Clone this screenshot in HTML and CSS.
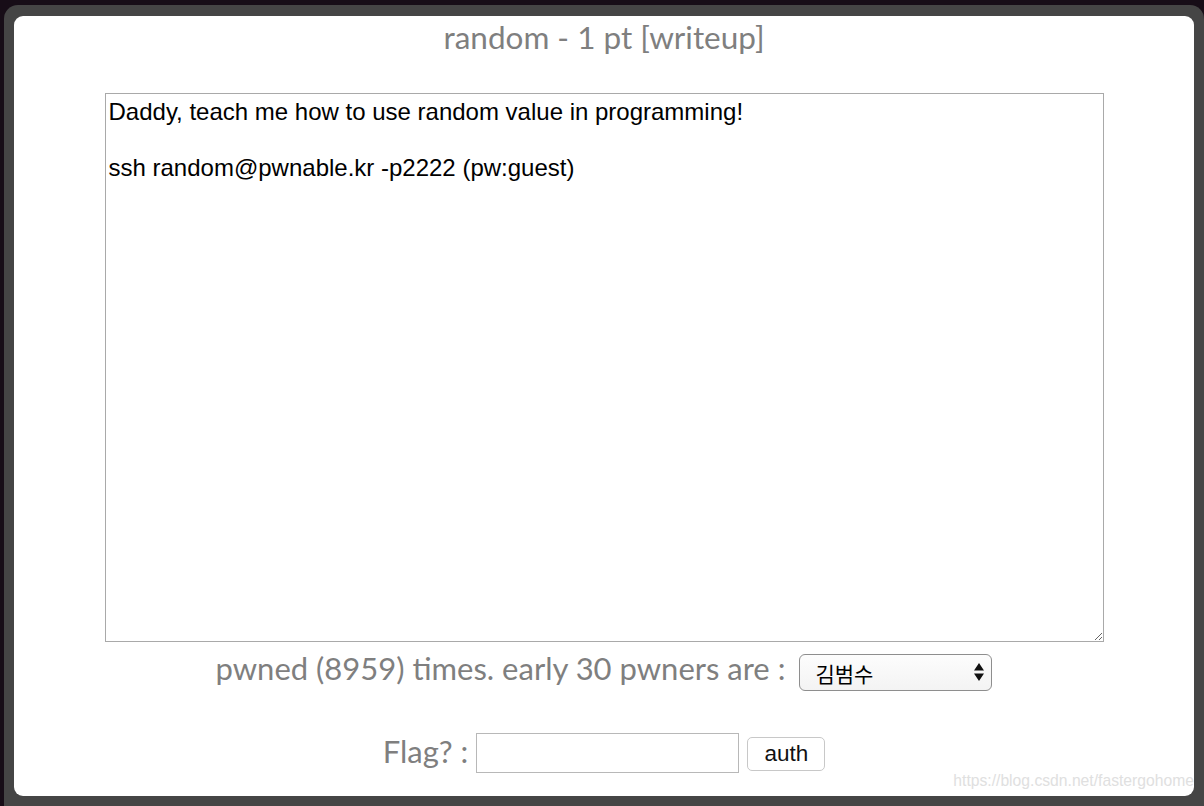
FILE: index.html
```html
<!DOCTYPE html>
<html>
<head>
<meta charset="utf-8">
<link rel="stylesheet" href="styles.css">
</head>
<body>
<div class="frame">
  <div class="modal">
    <div class="title">random - 1 pt [writeup]</div>
    <textarea class="desc">Daddy, teach me how to use random value in programming!

ssh random@pwnable.kr -p2222 (pw:guest)</textarea>
    <div class="pwned">
      <span class="label">pwned (8959) times. early 30 pwners are :</span>
      <span class="sel">
        <select class="pwners"><option>김범수</option></select>
        <svg class="arrows" width="12" height="20" viewBox="0 0 12 20"><path d="M6 1 L11 8.5 L1 8.5 Z M6 19 L11 11.5 L1 11.5 Z" fill="#111"/></svg>
      </span>
    </div>
    <div class="flag">
      <span class="label">Flag? :</span>
      <input class="flag-input" type="text">
      <button class="auth">auth</button>
    </div>
    <div class="watermark">https://blog.csdn.net/fastergohome</div>
  </div>
</div>
</body>
</html>
```
FILE: styles.css
```css
html, body {
  margin: 0;
  padding: 0;
  height: 100%;
  overflow: hidden;
}
body {
  background: #170d17;
}
.frame {
  margin: 5px 0 0 4px;
  padding: 11px 10px 10px 10px;
  background: #454545;
  border-radius: 14px 14px 0 0;
  height: 780px;
}
.modal {
  position: relative;
  background: #fff;
  border-radius: 9px;
  height: 780px;
  display: flex;
  flex-direction: column;
  align-items: center;
  font-family: Lato, "Liberation Sans", sans-serif;
  color: #7f7f7f;
}
.title {
  font-size: 31.5px;
  line-height: 37px;
  padding-top: 3px;
}
.desc {
  box-sizing: border-box;
  width: 999px;
  height: 549px;
  margin-top: 37px;
  border: 1px solid #a9a9a9;
  padding: 4px 3px;
  font-family: "Liberation Sans", Arial, sans-serif;
  font-size: 24px;
  line-height: 28px;
  color: #000;
  resize: both;
  outline: none;
}
.pwned {
  display: flex;
  align-items: flex-start;
  gap: 14px;
  margin-top: 4px;
  font-size: 31px;
}
.pwned .label {
  line-height: 37px;
  padding-top: 4px;
}
.sel {
  position: relative;
  display: block;
  margin-top: 8px;
  height: 37px;
}
.pwners {
  appearance: none;
  -webkit-appearance: none;
  box-sizing: border-box;
  display: block;
  width: 193px;
  height: 37px;
  border: 1px solid #8e8e8e;
  border-radius: 6px;
  background: linear-gradient(#fdfdfd, #f3f3f3);
  padding: 0 0 0 15px;
  font-family: "Noto Sans CJK KR", "Liberation Sans", sans-serif;
  font-size: 21px;
  color: #000;
}
.arrows {
  position: absolute;
  right: 7px;
  top: 8px;
  pointer-events: none;
}
.flag {
  display: flex;
  align-items: flex-start;
  gap: 8px;
  margin-top: 37px;
  font-size: 31px;
}
.flag .label {
  line-height: 40px;
  padding-top: 3px;
}
.flag-input {
  box-sizing: border-box;
  width: 263px;
  height: 40px;
  margin: 5px 0 0 0;
  border: 1px solid #b8b8b8;
}
.auth {
  box-sizing: border-box;
  width: 78px;
  height: 34px;
  margin-top: 9px;
  border: 1px solid #c8c8c8;
  border-radius: 5px;
  background: #fff;
  font-family: "Liberation Sans", Arial, sans-serif;
  font-size: 22.5px;
  color: #111;
  padding: 0;
}
.watermark {
  position: absolute;
  right: 0;
  bottom: 6px;
  font-family: "Liberation Sans", Arial, sans-serif;
  font-size: 15.7px;
  color: #e0e0e0;
}
```
